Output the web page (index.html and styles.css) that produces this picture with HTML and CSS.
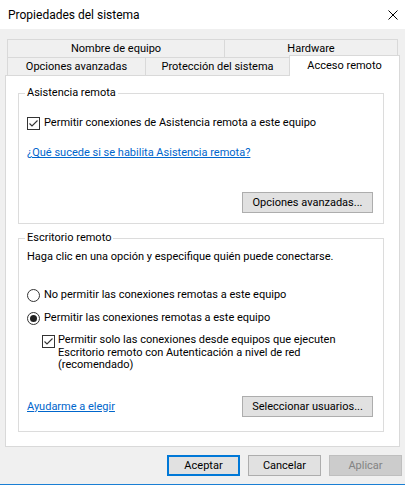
FILE: index.html
```html
<!DOCTYPE html>
<html lang="es">
<head>
<meta charset="utf-8">
<title>Propiedades del sistema</title>
<link rel="stylesheet" href="styles.css">
</head>
<body>
<div class="window">
  <div class="titlebar">
    <span class="title">Propiedades del sistema</span>
    <svg class="close" width="10" height="10" viewBox="0 0 10 10"><path d="M0.5 0.5 L9.5 9.5 M9.5 0.5 L0.5 9.5" stroke="#000" stroke-width="1" fill="none"/></svg>
  </div>
  <div class="tabs">
    <div class="tabrow back">
      <div class="tab tab-name">Nombre de equipo</div>
      <div class="tab tab-hw last">Hardware</div>
    </div>
    <div class="tabrow front">
      <div class="tab tab-adv">Opciones avanzadas</div>
      <div class="tab tab-prot">Protección del sistema</div>
      <div class="tab tab-sel last">Acceso remoto</div>
    </div>
  </div>
  <div class="panel">
    <fieldset class="group group-assist">
      <legend>Asistencia remota</legend>
      <label class="row">
        <svg class="box" width="13" height="13" viewBox="0 0 13 13"><rect x="0.5" y="0.5" width="12" height="12" fill="#fff" stroke="#333"/><path d="M2.5 6.5 L5 9 L10.5 3.5" stroke="#333" stroke-width="1.1" fill="none"/></svg>
        <span>Permitir conexiones de Asistencia remota a este equipo</span>
      </label>
      <div class="row link-row"><a class="link" href="#">¿Qué sucede si se habilita Asistencia remota?</a></div>
      <div class="btn-row"><button class="btn wide">Opciones avanzadas...</button></div>
    </fieldset>
    <fieldset class="group group-desk">
      <legend>Escritorio remoto</legend>
      <div class="row">Haga clic en una opción y especifique quién puede conectarse.</div>
      <label class="row radio-row first-radio">
        <svg class="box" width="13" height="13" viewBox="0 0 13 13"><circle cx="6.5" cy="6.5" r="6" fill="#fff" stroke="#333"/></svg>
        <span>No permitir las conexiones remotas a este equipo</span>
      </label>
      <label class="row radio-row second-radio">
        <svg class="box" width="13" height="13" viewBox="0 0 13 13"><circle cx="6.5" cy="6.5" r="6" fill="#fff" stroke="#333"/><circle cx="6.5" cy="6.5" r="3.5" fill="#222"/></svg>
        <span>Permitir las conexiones remotas a este equipo</span>
      </label>
      <label class="sub">
        <svg class="box sub-box" width="13" height="13" viewBox="0 0 13 13"><rect x="0.5" y="0.5" width="12" height="12" fill="#fff" stroke="#333"/><path d="M2.5 6.5 L5 9 L10.5 3.5" stroke="#333" stroke-width="1.1" fill="none"/></svg>
        <span>Permitir solo las conexiones desde equipos que ejecuten<br>Escritorio remoto con Autenticación a nivel de red<br>(recomendado)</span>
      </label>
      <div class="bottom-row">
        <a class="link" href="#">Ayudarme a elegir</a>
        <button class="btn wide">Seleccionar usuarios...</button>
      </div>
    </fieldset>
  </div>
  <div class="footer">
    <button class="btn small default">Aceptar</button>
    <button class="btn small">Cancelar</button>
    <button class="btn small disabled">Aplicar</button>
  </div>
</div>
</body>
</html>
```
FILE: styles.css
```css
body {
  margin: 0;
}
.window {
  width: 405px;
  height: 485px;
  box-sizing: border-box;
  background: #f0f0f0;
  border-bottom: 1px solid #1a7fd4;
  font: 11px Roboto, "Liberation Sans", sans-serif;
  color: #000;
  display: flex;
  flex-direction: column;
}
.titlebar {
  height: 29px;
  flex: none;
  background: #fff;
  display: flex;
  align-items: center;
  justify-content: space-between;
  padding: 0 7px 0 8px;
}
.title {
  font-size: 12px;
}
.close {
  width: 10px;
  height: 10px;
}
.tabs {
  margin-top: 10px;
  padding-left: 7px;
}
.tabrow {
  display: flex;
  height: 18px;
}
.tabrow.front {
  align-items: flex-end;
}
.tab {
  box-sizing: border-box;
  height: 18px;
  border: 1px solid #d9d9d9;
  border-bottom: none;
  border-right: none;
  text-align: center;
  line-height: 17px;
  white-space: nowrap;
}
.tab.last {
  border-right: 1px solid #d9d9d9;
}
.tab-name { width: 217px; }
.tab-hw { width: 174px; }
.tab-adv { width: 138px; }
.tab-prot { width: 144px; }
.tab-sel {
  width: 111px;
  height: 21px;
  margin-bottom: -1px;
  background: #fff;
  position: relative;
  z-index: 1;
  line-height: 17px;
  padding-top: 1px;
}
.panel {
  margin-left: 5px;
  width: 395px;
  height: 372px;
  box-sizing: border-box;
  background: #fff;
  border: 1px solid #d9d9d9;
  padding: 10px 15px 0 12px;
}
.group {
  margin: 0;
  min-width: 0;
  border: 1px solid #dcdcdc;
}
.group legend {
  padding: 0 2px;
  margin-left: -2px;
  line-height: 14px;
}
.group-assist {
  padding: 16px 10px 10px 8px;
}
.group-desk {
  margin-top: 7px;
  padding: 5px 10px 14px 8px;
}
.row {
  display: flex;
  align-items: center;
  gap: 4px;
  height: 14px;
  line-height: 14px;
  white-space: nowrap;
}
.box {
  flex: none;
  display: block;
}
.link-row {
  margin-top: 16px;
}
.link {
  color: #0066cc;
  text-decoration: underline;
}
.btn-row {
  display: flex;
  justify-content: flex-end;
  margin-top: 32px;
}
.first-radio {
  margin-top: 24px;
}
.second-radio {
  margin-top: 9px;
}
.sub {
  display: flex;
  align-items: flex-start;
  gap: 3px;
  margin-left: 15px;
  margin-top: 9px;
  line-height: 12.5px;
}
.sub-box {
  margin-top: 1px;
}
.bottom-row {
  display: flex;
  justify-content: space-between;
  align-items: center;
  margin-top: 24px;
}
.btn {
  box-sizing: border-box;
  height: 21px;
  padding: 0;
  margin: 0;
  background: #e1e1e1;
  border: 1px solid #adadad;
  font: inherit;
  color: #000;
  text-align: center;
}
.btn.wide {
  width: 131px;
}
.btn.small {
  width: 73px;
}
.btn.default {
  border: 2px solid #0078d7;
}
.btn.disabled {
  background: #cccccc;
  border-color: #bfbfbf;
  color: #838383;
}
.footer {
  display: flex;
  justify-content: flex-end;
  gap: 8px;
  margin-top: 8px;
  padding-right: 3px;
}
```
